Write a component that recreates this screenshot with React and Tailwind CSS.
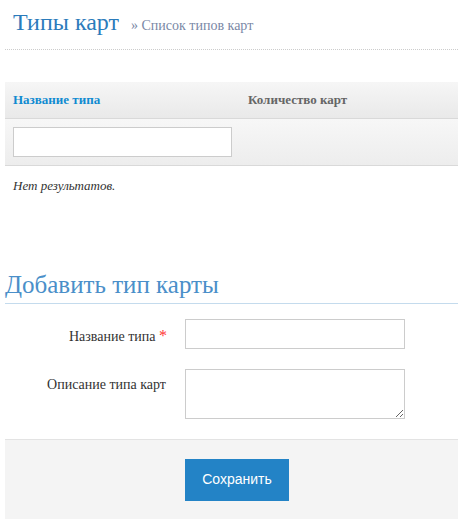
export default function App() {
  return (
    <div className="min-h-[519px] bg-white pl-[5px] pr-[1px] [font-family:'Liberation_Serif',serif] text-[#333]">
      <div className="flex items-baseline border-b border-dotted border-[#ccc] pl-2 pb-[12px] pt-[7px]">
        <h1 className="text-[24px] leading-[30px] text-[#2b7bbb]">Типы карт</h1>
        <span className="ml-[12px] text-[14px] text-[#7a88a6]">» Список типов карт</span>
      </div>

      <div className="mt-8">
        <div className="grid h-[37px] grid-cols-[235px_1fr] items-center border-b border-[#d9d9d9] bg-gradient-to-b from-[#f6f6f6] to-[#e9e9e9] text-[13px] font-bold">
          <span className="pl-2 text-[#118bd1]">Название типа</span>
          <span className="pl-[8px] text-[#666]">Количество карт</span>
        </div>
        <div className="flex h-[47px] items-center border-b border-[#d9d9d9] bg-gradient-to-b from-[#f7f7f7] to-[#ededed] pl-2">
          <input className="h-[30px] w-[219px] border border-[#ccc] bg-white outline-none" />
        </div>
        <p className="pl-2 pt-[10px] text-[13px] italic text-[#333]">Нет результатов.</p>
      </div>

      <h2 className="mt-[72px] border-b border-[#c4dbed] pb-[1px] text-[25px] leading-[34px] text-[#4a8fc9]">
        Добавить тип карты
      </h2>

      <div className="mt-[15px] grid grid-cols-[166px_220px] gap-x-[14px] gap-y-5 text-[14px]">
        <label className="pr-[4px] pt-[5px] text-right">
          Название типа <span className="text-[16px] text-[#f33]">*</span>
        </label>
        <input className="h-[30px] border border-[#ccc] bg-white outline-none" />
        <label className="pt-[5px] pr-[5px] text-right">Описание типа карт</label>
        <textarea className="h-[50px] resize-y border border-[#ccc] bg-white outline-none" />
      </div>

      <div className="mt-5 border-t border-[#e3e3e3] bg-[#f4f4f4] pb-[18px] pl-[180px] pt-[19px]">
        <button className="h-[42px] w-[104px] bg-[#2383c6] [font-family:'Liberation_Sans',sans-serif] text-[14px] text-white">
          Сохранить
        </button>
      </div>
    </div>
  );
}
